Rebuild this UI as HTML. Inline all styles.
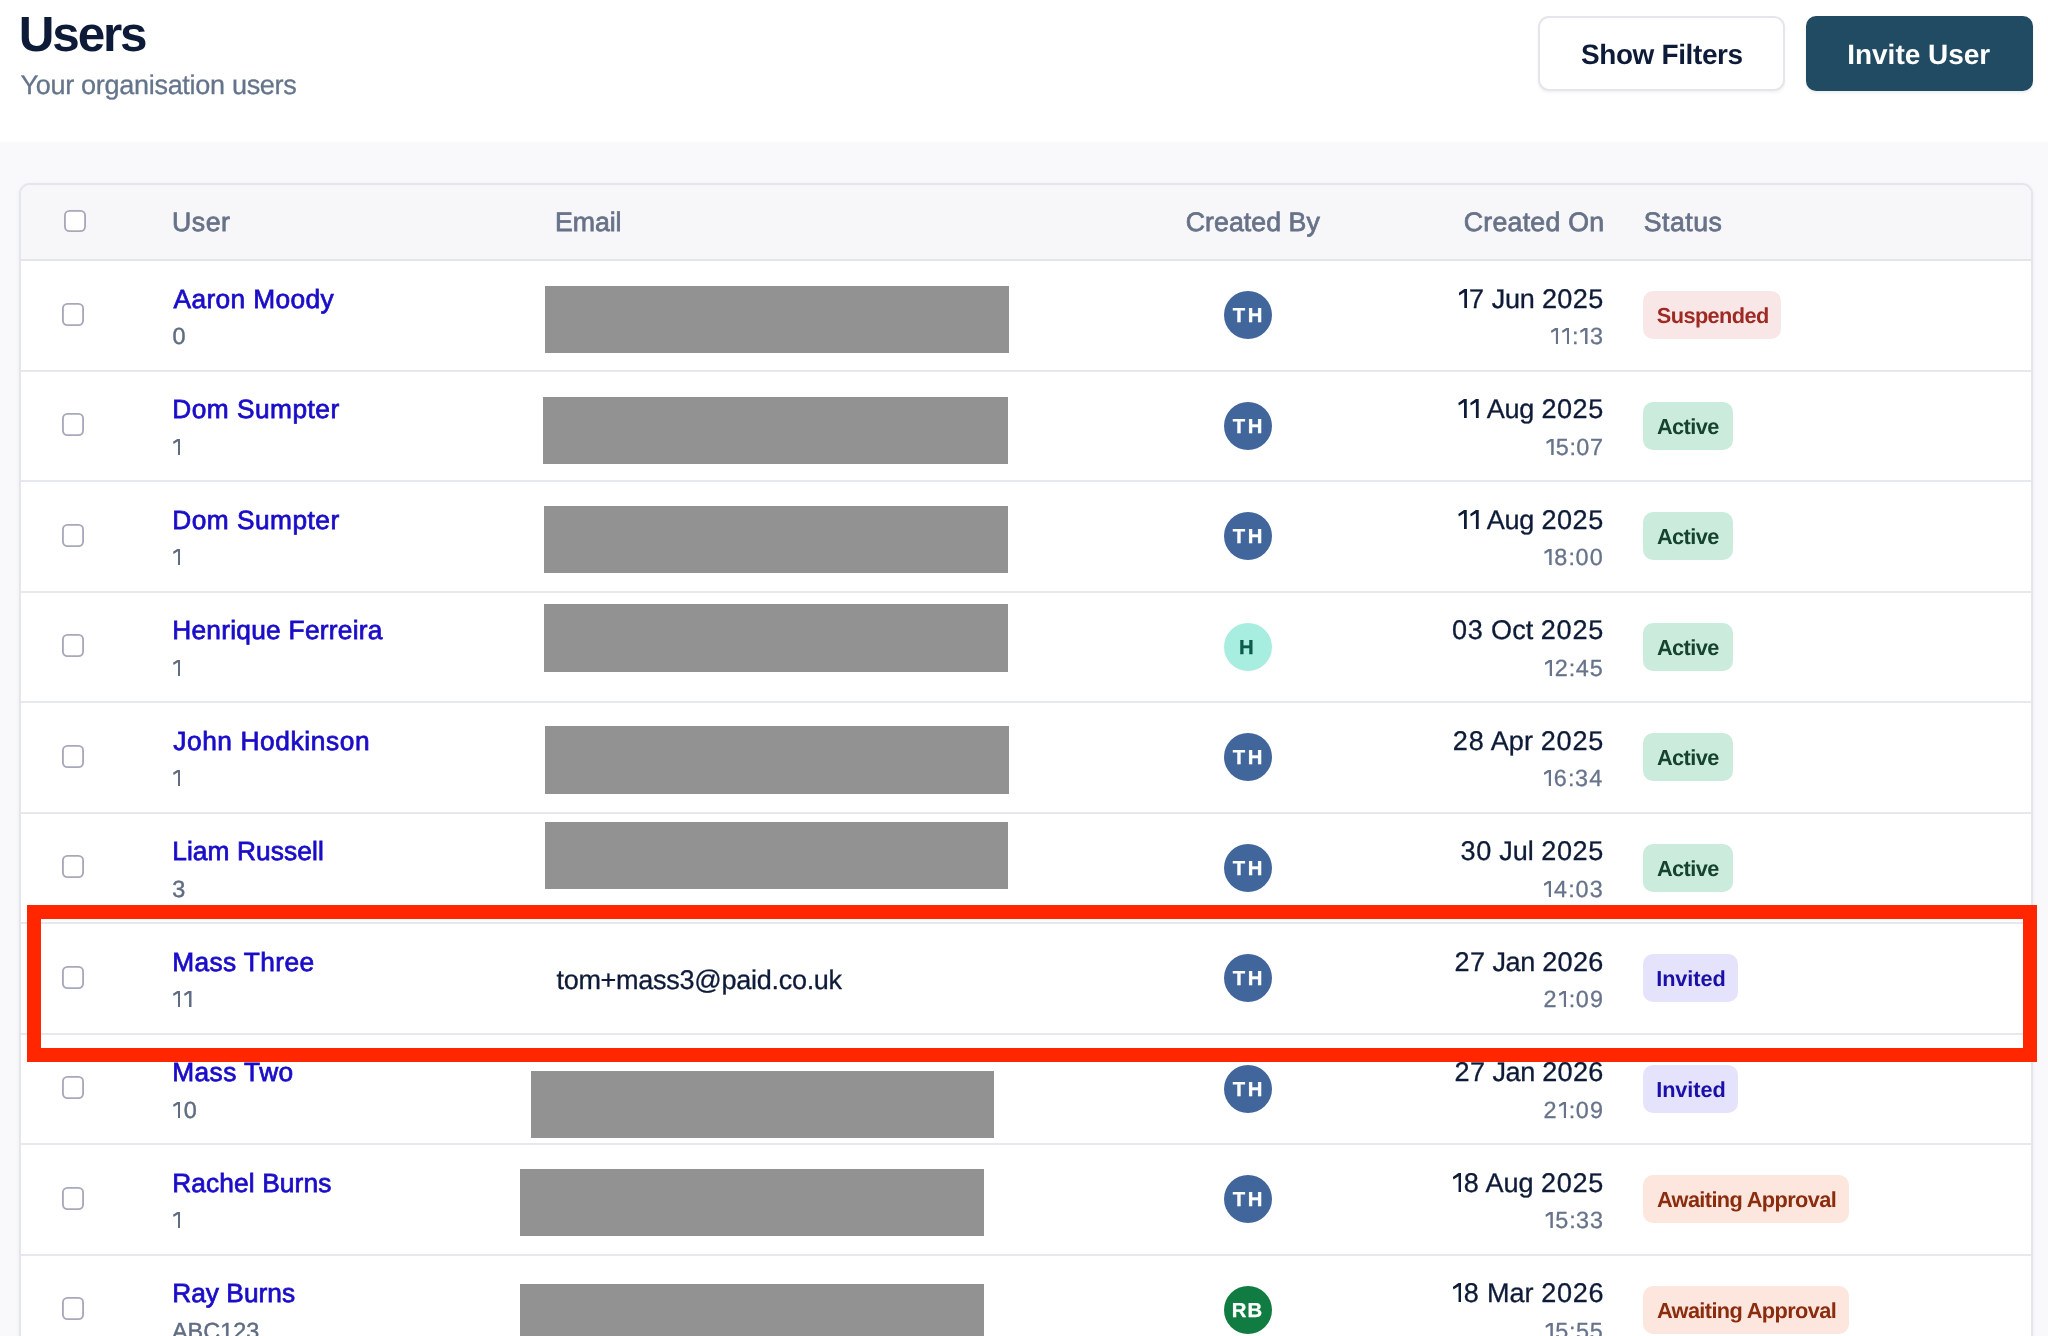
<!DOCTYPE html>
<html lang="en"><head><meta charset="utf-8"><title>Users</title><style>
html,body{margin:0;padding:0;width:2048px;height:1336px;overflow:hidden;background:#fff;font-family:"Liberation Sans",sans-serif;text-rendering:geometricPrecision}
body div{position:absolute}
.t{position:absolute;white-space:nowrap;line-height:1;z-index:5}
.o{display:inline-block;vertical-align:baseline;overflow:hidden;font-size:0;letter-spacing:0;background:currentColor;clip-path:polygon(67% 0,100% 0,100% 100%,67% 100%,67% 16%,7% 33.5%,0 20%)}
</style></head><body>
<div style="left:1538px;top:16px;width:247px;height:75px;box-sizing:border-box;border:2px solid #e5e5eb;border-radius:11px;background:#fff;box-shadow:0 2px 3px rgba(15,23,42,.05)"></div>
<div style="left:1806px;top:16px;width:227px;height:75px;border-radius:10px;background:#204b63;box-shadow:0 2px 3px rgba(15,23,42,.08)"></div>
<div style="left:0;top:142px;width:2048px;height:1194px;background:#f9f9fb"></div>
<div style="left:19px;top:183px;width:2014px;height:1400px;box-sizing:border-box;border:2px solid #e5e5ec;border-radius:11px;background:#fff;overflow:hidden;box-shadow:0 1px 4px rgba(15,23,42,.05)"><div style="left:0;top:0;width:2014px;height:75px;background:#f7f7f9"></div></div>
<div style="left:21px;top:259px;width:2010px;height:2px;background:#e4e4eb"></div>
<div style="left:64px;top:210px;width:22px;height:22px;border-radius:5.5px;background:#fff;box-shadow:inset 0 0 0 1.85px #a9a8ba"></div>
<div style="left:62px;top:303px;width:22px;height:23px;border-radius:5.5px;background:#fff;box-shadow:inset 0 0 0 1.85px #a9a8ba"></div>
<div style="left:545px;top:286px;width:463.5px;height:67.0px;background:#929292"></div>
<div style="left:1224.1px;top:291.4px;width:48px;height:48px;border-radius:50%;background:#41669b"></div>
<div style="left:1643.1px;top:291.4px;width:138.4px;height:48px;border-radius:10px;background:#f9e7e7"></div>
<div style="left:21px;top:369.5px;width:2010px;height:2px;background:#e7e7ee"></div>
<div style="left:62px;top:413px;width:22px;height:23px;border-radius:5.5px;background:#fff;box-shadow:inset 0 0 0 1.85px #a9a8ba"></div>
<div style="left:543.4px;top:397.4px;width:464.3px;height:66.6px;background:#929292"></div>
<div style="left:1224.1px;top:401.9px;width:48px;height:48px;border-radius:50%;background:#41669b"></div>
<div style="left:1643.1px;top:401.9px;width:89.8px;height:48px;border-radius:10px;background:#cbebdc"></div>
<div style="left:21px;top:480.0px;width:2010px;height:2px;background:#e7e7ee"></div>
<div style="left:62px;top:524px;width:22px;height:23px;border-radius:5.5px;background:#fff;box-shadow:inset 0 0 0 1.85px #a9a8ba"></div>
<div style="left:544.3px;top:506.2px;width:463.9px;height:66.6px;background:#929292"></div>
<div style="left:1224.1px;top:512.4px;width:48px;height:48px;border-radius:50%;background:#41669b"></div>
<div style="left:1643.1px;top:512.4px;width:89.8px;height:48px;border-radius:10px;background:#cbebdc"></div>
<div style="left:21px;top:590.5px;width:2010px;height:2px;background:#e7e7ee"></div>
<div style="left:62px;top:634px;width:22px;height:23px;border-radius:5.5px;background:#fff;box-shadow:inset 0 0 0 1.85px #a9a8ba"></div>
<div style="left:544.3px;top:604.3px;width:463.9px;height:67.3px;background:#929292"></div>
<div style="left:1224.1px;top:622.9px;width:48px;height:48px;border-radius:50%;background:#a7ede0"></div>
<div style="left:1643.1px;top:622.9px;width:89.8px;height:48px;border-radius:10px;background:#cbebdc"></div>
<div style="left:21px;top:701.0px;width:2010px;height:2px;background:#e7e7ee"></div>
<div style="left:62px;top:745px;width:22px;height:23px;border-radius:5.5px;background:#fff;box-shadow:inset 0 0 0 1.85px #a9a8ba"></div>
<div style="left:545px;top:726.4px;width:463.8px;height:67.2px;background:#929292"></div>
<div style="left:1224.1px;top:733.4px;width:48px;height:48px;border-radius:50%;background:#41669b"></div>
<div style="left:1643.1px;top:733.4px;width:89.8px;height:48px;border-radius:10px;background:#cbebdc"></div>
<div style="left:21px;top:811.5px;width:2010px;height:2px;background:#e7e7ee"></div>
<div style="left:62px;top:855px;width:22px;height:23px;border-radius:5.5px;background:#fff;box-shadow:inset 0 0 0 1.85px #a9a8ba"></div>
<div style="left:544.8px;top:822.4px;width:463.1px;height:66.2px;background:#929292"></div>
<div style="left:1224.1px;top:843.9px;width:48px;height:48px;border-radius:50%;background:#41669b"></div>
<div style="left:1643.1px;top:843.9px;width:89.8px;height:48px;border-radius:10px;background:#cbebdc"></div>
<div style="left:21px;top:922.0px;width:2010px;height:2px;background:#e7e7ee"></div>
<div style="left:62px;top:966px;width:22px;height:23px;border-radius:5.5px;background:#fff;box-shadow:inset 0 0 0 1.85px #a9a8ba"></div>
<div style="left:1224.1px;top:954.4px;width:48px;height:48px;border-radius:50%;background:#41669b"></div>
<div style="left:1643.1px;top:954.4px;width:94.8px;height:48px;border-radius:10px;background:#e4e3fb"></div>
<div style="left:21px;top:1032.5px;width:2010px;height:2px;background:#e7e7ee"></div>
<div style="left:62px;top:1076px;width:22px;height:23px;border-radius:5.5px;background:#fff;box-shadow:inset 0 0 0 1.85px #a9a8ba"></div>
<div style="left:530.5px;top:1071px;width:463.8px;height:66.8px;background:#929292"></div>
<div style="left:1224.1px;top:1064.9px;width:48px;height:48px;border-radius:50%;background:#41669b"></div>
<div style="left:1643.1px;top:1064.9px;width:94.8px;height:48px;border-radius:10px;background:#e4e3fb"></div>
<div style="left:21px;top:1143.0px;width:2010px;height:2px;background:#e7e7ee"></div>
<div style="left:62px;top:1187px;width:22px;height:23px;border-radius:5.5px;background:#fff;box-shadow:inset 0 0 0 1.85px #a9a8ba"></div>
<div style="left:519.6px;top:1169px;width:464.0px;height:66.6px;background:#929292"></div>
<div style="left:1224.1px;top:1175.4px;width:48px;height:48px;border-radius:50%;background:#41669b"></div>
<div style="left:1643.1px;top:1175.4px;width:205.9px;height:48px;border-radius:10px;background:#fde6de"></div>
<div style="left:21px;top:1253.5px;width:2010px;height:2px;background:#e7e7ee"></div>
<div style="left:62px;top:1297px;width:22px;height:23px;border-radius:5.5px;background:#fff;box-shadow:inset 0 0 0 1.85px #a9a8ba"></div>
<div style="left:519.6px;top:1284px;width:464.2px;height:67.0px;background:#929292"></div>
<div style="left:1224.1px;top:1285.9px;width:48px;height:48px;border-radius:50%;background:#107c41"></div>
<div style="left:1643.1px;top:1285.9px;width:205.9px;height:48px;border-radius:10px;background:#fde6de"></div>
<div id="tx" style="left:0;top:0;width:2048px;height:1336px;will-change:transform;z-index:5">
<span class="t" style="left:18.84px;top:10px;font-size:49.42px;font-weight:700;color:#0e1b38;letter-spacing:-2.171px;">Users</span>
<span class="t" style="left:20.51px;top:72px;font-size:27.06px;font-weight:400;color:#64748b;letter-spacing:-0.312px;-webkit-text-stroke:0.3px #64748b;">Your organisation users</span>
<span class="t" style="left:1580.89px;top:41px;font-size:27.97px;font-weight:700;color:#0e1b38;letter-spacing:-0.362px;">Show Filters</span>
<span class="t" style="left:1847.21px;top:41px;font-size:27.97px;font-weight:700;color:#ffffff;letter-spacing:-0.002px;">Invite User</span>
<span class="t" style="left:172.11px;top:209px;font-size:26.71px;font-weight:400;color:#677288;letter-spacing:0.476px;-webkit-text-stroke:0.75px #677288;">User</span>
<span class="t" style="left:555.07px;top:209px;font-size:26.71px;font-weight:400;color:#677288;letter-spacing:-0.087px;-webkit-text-stroke:0.75px #677288;">Email</span>
<span class="t" style="left:1185.68px;top:209px;font-size:26.71px;font-weight:400;color:#677288;letter-spacing:0.059px;-webkit-text-stroke:0.75px #677288;">Created By</span>
<span class="t" style="left:1463.82px;top:209px;font-size:26.71px;font-weight:400;color:#677288;letter-spacing:0.242px;-webkit-text-stroke:0.75px #677288;">Created On</span>
<span class="t" style="left:1643.68px;top:209px;font-size:26.71px;font-weight:400;color:#677288;letter-spacing:0.515px;-webkit-text-stroke:0.75px #677288;">Status</span>
<span class="t" style="left:173.56px;top:286px;font-size:26.30px;font-weight:400;color:#1a0dc8;letter-spacing:0.366px;-webkit-text-stroke:0.75px #1a0dc8;">Aaron Moody</span>
<span class="t" style="left:172.38px;top:325px;font-size:23.41px;font-weight:400;color:#5f6c82;-webkit-text-stroke:0.45px #5f6c82;"><span style="letter-spacing:0.609px">0</span></span>
<span class="t" style="left:1232.70px;top:306px;font-size:20.29px;font-weight:700;color:#ffffff;letter-spacing:2.576px;-webkit-text-stroke:0.3px #ffffff;">TH</span>
<span class="t" style="left:1457.27px;top:286px;font-size:27.06px;font-weight:400;color:#0e1b38;letter-spacing:-0.269px;-webkit-text-stroke:0.3px #0e1b38;"><span style="letter-spacing:0.435px"><i class="o" style="width:8.50px;height:18.90px;margin:0 2.04px 0 1.32px">1</i>7</span> Jun <span style="letter-spacing:0.435px">2025</span></span>
<span class="t" style="left:1549.78px;top:325px;font-size:23.41px;font-weight:400;color:#67738b;letter-spacing:0.506px;-webkit-text-stroke:0.3px #67738b;"><span style="letter-spacing:1.115px"><i class="o" style="width:7.42px;height:16.50px;margin:0 2.52px 0 1.16px">1</i><i class="o" style="width:7.42px;height:16.50px;margin:0 2.52px 0 1.16px">1</i></span>:<span style="letter-spacing:1.115px"><i class="o" style="width:7.42px;height:16.50px;margin:0 2.52px 0 1.16px">1</i>3</span></span>
<span class="t" style="left:1656.84px;top:305px;font-size:21.74px;font-weight:700;color:#9e2a24;letter-spacing:-0.590px;">Suspended</span>
<span class="t" style="left:172.17px;top:396px;font-size:26.30px;font-weight:400;color:#1a0dc8;letter-spacing:0.481px;-webkit-text-stroke:0.75px #1a0dc8;">Dom Sumpter</span>
<span class="t" style="left:171.88px;top:436px;font-size:23.41px;font-weight:400;color:#5f6c82;-webkit-text-stroke:0.45px #5f6c82;"><span style="letter-spacing:0.609px"><i class="o" style="width:7.42px;height:16.50px;margin:0 2.01px 0 1.16px">1</i></span></span>
<span class="t" style="left:1232.70px;top:417px;font-size:20.29px;font-weight:700;color:#ffffff;letter-spacing:2.576px;-webkit-text-stroke:0.3px #ffffff;">TH</span>
<span class="t" style="left:1456.97px;top:396px;font-size:27.06px;font-weight:400;color:#0e1b38;letter-spacing:-0.193px;-webkit-text-stroke:0.3px #0e1b38;"><span style="letter-spacing:0.510px"><i class="o" style="width:8.50px;height:18.90px;margin:0 2.12px 0 1.32px">1</i><i class="o" style="width:8.50px;height:18.90px;margin:0 2.12px 0 1.32px">1</i></span> Aug <span style="letter-spacing:0.510px">2025</span></span>
<span class="t" style="left:1545.08px;top:436px;font-size:23.41px;font-weight:400;color:#67738b;letter-spacing:0.153px;-webkit-text-stroke:0.3px #67738b;"><span style="letter-spacing:0.762px"><i class="o" style="width:7.42px;height:16.50px;margin:0 2.16px 0 1.16px">1</i>5</span>:<span style="letter-spacing:0.762px">07</span></span>
<span class="t" style="left:1656.90px;top:416px;font-size:21.74px;font-weight:700;color:#15432f;letter-spacing:-0.545px;">Active</span>
<span class="t" style="left:172.17px;top:507px;font-size:26.30px;font-weight:400;color:#1a0dc8;letter-spacing:0.481px;-webkit-text-stroke:0.75px #1a0dc8;">Dom Sumpter</span>
<span class="t" style="left:171.88px;top:546px;font-size:23.41px;font-weight:400;color:#5f6c82;-webkit-text-stroke:0.45px #5f6c82;"><span style="letter-spacing:0.609px"><i class="o" style="width:7.42px;height:16.50px;margin:0 2.01px 0 1.16px">1</i></span></span>
<span class="t" style="left:1232.70px;top:527px;font-size:20.29px;font-weight:700;color:#ffffff;letter-spacing:2.576px;-webkit-text-stroke:0.3px #ffffff;">TH</span>
<span class="t" style="left:1456.97px;top:507px;font-size:27.06px;font-weight:400;color:#0e1b38;letter-spacing:-0.193px;-webkit-text-stroke:0.3px #0e1b38;"><span style="letter-spacing:0.510px"><i class="o" style="width:8.50px;height:18.90px;margin:0 2.12px 0 1.32px">1</i><i class="o" style="width:8.50px;height:18.90px;margin:0 2.12px 0 1.32px">1</i></span> Aug <span style="letter-spacing:0.510px">2025</span></span>
<span class="t" style="left:1543.08px;top:546px;font-size:23.41px;font-weight:400;color:#67738b;letter-spacing:0.585px;-webkit-text-stroke:0.3px #67738b;"><span style="letter-spacing:1.193px"><i class="o" style="width:7.42px;height:16.50px;margin:0 2.60px 0 1.16px">1</i>8</span>:<span style="letter-spacing:1.193px">00</span></span>
<span class="t" style="left:1656.90px;top:526px;font-size:21.74px;font-weight:700;color:#15432f;letter-spacing:-0.545px;">Active</span>
<span class="t" style="left:172.17px;top:617px;font-size:26.30px;font-weight:400;color:#1a0dc8;letter-spacing:0.264px;-webkit-text-stroke:0.75px #1a0dc8;">Henrique Ferreira</span>
<span class="t" style="left:171.88px;top:657px;font-size:23.41px;font-weight:400;color:#5f6c82;-webkit-text-stroke:0.45px #5f6c82;"><span style="letter-spacing:0.609px"><i class="o" style="width:7.42px;height:16.50px;margin:0 2.01px 0 1.16px">1</i></span></span>
<span class="t" style="left:1239.10px;top:638px;font-size:20.29px;font-weight:700;color:#0d5c4a;-webkit-text-stroke:0.3px #0d5c4a;">H</span>
<span class="t" style="left:1451.93px;top:617px;font-size:27.06px;font-weight:400;color:#0e1b38;letter-spacing:0.041px;-webkit-text-stroke:0.3px #0e1b38;"><span style="letter-spacing:0.745px">03</span> Oct <span style="letter-spacing:0.745px">2025</span></span>
<span class="t" style="left:1543.58px;top:657px;font-size:23.41px;font-weight:400;color:#67738b;letter-spacing:0.476px;-webkit-text-stroke:0.3px #67738b;"><span style="letter-spacing:1.085px"><i class="o" style="width:7.42px;height:16.50px;margin:0 2.49px 0 1.16px">1</i>2</span>:<span style="letter-spacing:1.085px">45</span></span>
<span class="t" style="left:1656.90px;top:637px;font-size:21.74px;font-weight:700;color:#15432f;letter-spacing:-0.545px;">Active</span>
<span class="t" style="left:173.16px;top:728px;font-size:26.30px;font-weight:400;color:#1a0dc8;letter-spacing:0.602px;-webkit-text-stroke:0.75px #1a0dc8;">John Hodkinson</span>
<span class="t" style="left:171.88px;top:767px;font-size:23.41px;font-weight:400;color:#5f6c82;-webkit-text-stroke:0.45px #5f6c82;"><span style="letter-spacing:0.609px"><i class="o" style="width:7.42px;height:16.50px;margin:0 2.01px 0 1.16px">1</i></span></span>
<span class="t" style="left:1232.70px;top:748px;font-size:20.29px;font-weight:700;color:#ffffff;letter-spacing:2.576px;-webkit-text-stroke:0.3px #ffffff;">TH</span>
<span class="t" style="left:1452.79px;top:728px;font-size:27.06px;font-weight:400;color:#0e1b38;letter-spacing:0.119px;-webkit-text-stroke:0.3px #0e1b38;"><span style="letter-spacing:0.823px">28</span> Apr <span style="letter-spacing:0.823px">2025</span></span>
<span class="t" style="left:1542.67px;top:767px;font-size:23.41px;font-weight:400;color:#67738b;letter-spacing:0.565px;-webkit-text-stroke:0.3px #67738b;"><span style="letter-spacing:1.174px"><i class="o" style="width:7.42px;height:16.50px;margin:0 2.58px 0 1.16px">1</i>6</span>:<span style="letter-spacing:1.174px">34</span></span>
<span class="t" style="left:1656.90px;top:747px;font-size:21.74px;font-weight:700;color:#15432f;letter-spacing:-0.545px;">Active</span>
<span class="t" style="left:172.17px;top:838px;font-size:26.30px;font-weight:400;color:#1a0dc8;letter-spacing:0.107px;-webkit-text-stroke:0.75px #1a0dc8;">Liam Russell</span>
<span class="t" style="left:172.30px;top:878px;font-size:23.41px;font-weight:400;color:#5f6c82;-webkit-text-stroke:0.45px #5f6c82;"><span style="letter-spacing:0.609px">3</span></span>
<span class="t" style="left:1232.70px;top:859px;font-size:20.29px;font-weight:700;color:#ffffff;letter-spacing:2.576px;-webkit-text-stroke:0.3px #ffffff;">TH</span>
<span class="t" style="left:1460.49px;top:838px;font-size:27.06px;font-weight:400;color:#0e1b38;letter-spacing:-0.052px;-webkit-text-stroke:0.3px #0e1b38;"><span style="letter-spacing:0.651px">30</span> Jul <span style="letter-spacing:0.651px">2025</span></span>
<span class="t" style="left:1542.67px;top:878px;font-size:23.41px;font-weight:400;color:#67738b;letter-spacing:0.714px;-webkit-text-stroke:0.3px #67738b;"><span style="letter-spacing:1.323px"><i class="o" style="width:7.42px;height:16.50px;margin:0 2.73px 0 1.16px">1</i>4</span>:<span style="letter-spacing:1.323px">03</span></span>
<span class="t" style="left:1656.90px;top:858px;font-size:21.74px;font-weight:700;color:#15432f;letter-spacing:-0.545px;">Active</span>
<span class="t" style="left:172.17px;top:949px;font-size:26.30px;font-weight:400;color:#1a0dc8;letter-spacing:0.399px;-webkit-text-stroke:0.75px #1a0dc8;">Mass Three</span>
<span class="t" style="left:171.88px;top:988px;font-size:23.41px;font-weight:400;color:#5f6c82;letter-spacing:0.484px;-webkit-text-stroke:0.45px #5f6c82;"><span style="letter-spacing:1.093px"><i class="o" style="width:7.42px;height:16.50px;margin:0 2.50px 0 1.16px">1</i><i class="o" style="width:7.42px;height:16.50px;margin:0 2.50px 0 1.16px">1</i></span></span>
<span class="t" style="left:556.41px;top:967px;font-size:27.06px;font-weight:400;color:#0e1b38;letter-spacing:-0.293px;-webkit-text-stroke:0.3px #0e1b38;">tom+mass3@paid.co.uk</span>
<span class="t" style="left:1232.70px;top:969px;font-size:20.29px;font-weight:700;color:#ffffff;letter-spacing:2.576px;-webkit-text-stroke:0.3px #ffffff;">TH</span>
<span class="t" style="left:1454.50px;top:949px;font-size:27.06px;font-weight:400;color:#0e1b38;letter-spacing:-0.361px;-webkit-text-stroke:0.3px #0e1b38;"><span style="letter-spacing:0.342px">27</span> Jan <span style="letter-spacing:0.342px">2026</span></span>
<span class="t" style="left:1543.55px;top:988px;font-size:23.41px;font-weight:400;color:#67738b;letter-spacing:0.534px;-webkit-text-stroke:0.3px #67738b;"><span style="letter-spacing:1.142px">2<i class="o" style="width:7.42px;height:16.50px;margin:0 2.54px 0 1.16px">1</i></span>:<span style="letter-spacing:1.142px">09</span></span>
<span class="t" style="left:1656.25px;top:968px;font-size:21.74px;font-weight:700;color:#1a0fa8;letter-spacing:-0.096px;">Invited</span>
<span class="t" style="left:172.17px;top:1059px;font-size:26.30px;font-weight:400;color:#1a0dc8;letter-spacing:0.456px;-webkit-text-stroke:0.75px #1a0dc8;">Mass Two</span>
<span class="t" style="left:171.88px;top:1099px;font-size:23.41px;font-weight:400;color:#5f6c82;letter-spacing:1.333px;-webkit-text-stroke:0.45px #5f6c82;"><span style="letter-spacing:1.942px"><i class="o" style="width:7.42px;height:16.50px;margin:0 3.34px 0 1.16px">1</i>0</span></span>
<span class="t" style="left:1232.70px;top:1080px;font-size:20.29px;font-weight:700;color:#ffffff;letter-spacing:2.576px;-webkit-text-stroke:0.3px #ffffff;">TH</span>
<span class="t" style="left:1454.50px;top:1059px;font-size:27.06px;font-weight:400;color:#0e1b38;letter-spacing:-0.361px;-webkit-text-stroke:0.3px #0e1b38;"><span style="letter-spacing:0.342px">27</span> Jan <span style="letter-spacing:0.342px">2026</span></span>
<span class="t" style="left:1543.55px;top:1099px;font-size:23.41px;font-weight:400;color:#67738b;letter-spacing:0.534px;-webkit-text-stroke:0.3px #67738b;"><span style="letter-spacing:1.142px">2<i class="o" style="width:7.42px;height:16.50px;margin:0 2.54px 0 1.16px">1</i></span>:<span style="letter-spacing:1.142px">09</span></span>
<span class="t" style="left:1656.25px;top:1079px;font-size:21.74px;font-weight:700;color:#1a0fa8;letter-spacing:-0.096px;">Invited</span>
<span class="t" style="left:172.17px;top:1170px;font-size:26.30px;font-weight:400;color:#1a0dc8;letter-spacing:0.118px;-webkit-text-stroke:0.75px #1a0dc8;">Rachel Burns</span>
<span class="t" style="left:171.88px;top:1209px;font-size:23.41px;font-weight:400;color:#5f6c82;-webkit-text-stroke:0.45px #5f6c82;"><span style="letter-spacing:0.609px"><i class="o" style="width:7.42px;height:16.50px;margin:0 2.01px 0 1.16px">1</i></span></span>
<span class="t" style="left:1232.70px;top:1190px;font-size:20.29px;font-weight:700;color:#ffffff;letter-spacing:2.576px;-webkit-text-stroke:0.3px #ffffff;">TH</span>
<span class="t" style="left:1451.56px;top:1170px;font-size:27.06px;font-weight:400;color:#0e1b38;letter-spacing:-0.009px;-webkit-text-stroke:0.3px #0e1b38;"><span style="letter-spacing:0.694px"><i class="o" style="width:8.50px;height:18.90px;margin:0 2.30px 0 1.32px">1</i>8</span> Aug <span style="letter-spacing:0.694px">2025</span></span>
<span class="t" style="left:1544.28px;top:1209px;font-size:23.41px;font-weight:400;color:#67738b;letter-spacing:0.337px;-webkit-text-stroke:0.3px #67738b;"><span style="letter-spacing:0.945px"><i class="o" style="width:7.42px;height:16.50px;margin:0 2.35px 0 1.16px">1</i>5</span>:<span style="letter-spacing:0.945px">33</span></span>
<span class="t" style="left:1656.90px;top:1189px;font-size:21.74px;font-weight:700;color:#8a2c0d;letter-spacing:-0.611px;">Awaiting Approval</span>
<span class="t" style="left:172.17px;top:1280px;font-size:26.30px;font-weight:400;color:#1a0dc8;letter-spacing:0.029px;-webkit-text-stroke:0.75px #1a0dc8;">Ray Burns</span>
<span class="t" style="left:171.90px;top:1320px;font-size:23.41px;font-weight:400;color:#5f6c82;letter-spacing:0.050px;-webkit-text-stroke:0.45px #5f6c82;">ABC123</span>
<span class="t" style="left:1231.64px;top:1301px;font-size:20.29px;font-weight:700;color:#ffffff;letter-spacing:1.118px;-webkit-text-stroke:0.3px #ffffff;">RB</span>
<span class="t" style="left:1451.56px;top:1280px;font-size:27.06px;font-weight:400;color:#0e1b38;letter-spacing:0.019px;-webkit-text-stroke:0.3px #0e1b38;"><span style="letter-spacing:0.723px"><i class="o" style="width:8.50px;height:18.90px;margin:0 2.33px 0 1.32px">1</i>8</span> Mar <span style="letter-spacing:0.723px">2026</span></span>
<span class="t" style="left:1544.28px;top:1320px;font-size:23.41px;font-weight:400;color:#67738b;letter-spacing:0.312px;-webkit-text-stroke:0.3px #67738b;"><span style="letter-spacing:0.921px"><i class="o" style="width:7.42px;height:16.50px;margin:0 2.32px 0 1.16px">1</i>5</span>:<span style="letter-spacing:0.921px">55</span></span>
<span class="t" style="left:1656.90px;top:1300px;font-size:21.74px;font-weight:700;color:#8a2c0d;letter-spacing:-0.611px;">Awaiting Approval</span>
</div>
<div style="left:27px;top:905px;width:2010px;height:157px;box-sizing:border-box;border:14px solid #ff2600;z-index:20"></div>
</body></html>
